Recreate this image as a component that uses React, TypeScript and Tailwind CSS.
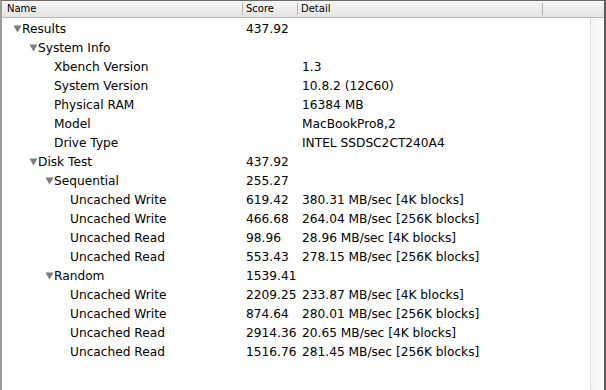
import React from "react";

type Row = { name: string; level: number; expandable?: boolean; score?: string; detail?: string };

const rows: Row[] = [
  { name: "Results", level: 0, expandable: true, score: "437.92" },
  { name: "System Info", level: 1, expandable: true },
  { name: "Xbench Version", level: 2, detail: "1.3" },
  { name: "System Version", level: 2, detail: "10.8.2 (12C60)" },
  { name: "Physical RAM", level: 2, detail: "16384 MB" },
  { name: "Model", level: 2, detail: "MacBookPro8,2" },
  { name: "Drive Type", level: 2, detail: "INTEL SSDSC2CT240A4" },
  { name: "Disk Test", level: 1, expandable: true, score: "437.92" },
  { name: "Sequential", level: 2, expandable: true, score: "255.27" },
  { name: "Uncached Write", level: 3, score: "619.42", detail: "380.31 MB/sec [4K blocks]" },
  { name: "Uncached Write", level: 3, score: "466.68", detail: "264.04 MB/sec [256K blocks]" },
  { name: "Uncached Read", level: 3, score: "98.96", detail: "28.96 MB/sec [4K blocks]" },
  { name: "Uncached Read", level: 3, score: "553.43", detail: "278.15 MB/sec [256K blocks]" },
  { name: "Random", level: 2, expandable: true, score: "1539.41" },
  { name: "Uncached Write", level: 3, score: "2209.25", detail: "233.87 MB/sec [4K blocks]" },
  { name: "Uncached Write", level: 3, score: "874.64", detail: "280.01 MB/sec [256K blocks]" },
  { name: "Uncached Read", level: 3, score: "2914.36", detail: "20.65 MB/sec [4K blocks]" },
  { name: "Uncached Read", level: 3, score: "1516.76", detail: "281.45 MB/sec [256K blocks]" },
];

const indents = ["pl-[11px]", "pl-[27px]", "pl-[43px]", "pl-[59px]"];

function Tri() {
  return (
    <svg width="9" height="8" viewBox="0 0 9 8" className="shrink-0">
      <polygon points="0.5,0.5 8.5,0.5 4.5,7.5" fill="#7d7d7d" />
    </svg>
  );
}

export default function App() {
  return (
    <div
      className="w-[606px] h-[390px] bg-white flex flex-col overflow-hidden border-t border-t-[#6b6b6b] border-l-2 border-l-[#9c9c9c] border-r-2 border-r-[#5a5a5a] text-black"
      style={{ fontFamily: '"DejaVu Sans", "Liberation Sans", sans-serif' }}
    >
      <div className="h-[17px] flex shrink-0 border-b border-b-[#b9b9b9] bg-gradient-to-b from-[#f6f6f6] to-[#e4e4e4] text-[10px] leading-[16px]">
        <div className="w-[241px] pl-[5px] border-r border-r-[#b4b4b4] my-[2px] leading-[12px]">Name</div>
        <div className="w-[55px] pl-[3px] border-r border-r-[#b4b4b4] my-[2px] leading-[12px]">Score</div>
        <div className="w-[245px] pl-[3px] border-r border-r-[#b4b4b4] my-[2px] leading-[12px]">Detail</div>
        <div className="flex-1" />
      </div>
      <div className="flex flex-1 min-h-0">
        <div className="flex-1 pt-[2px] text-[12.2px]">
          {rows.map((r, i) => (
            <div key={i} className="h-[19px] flex items-center">
              <div className={`w-[241px] flex items-center ${indents[r.level]}`}>
                {r.expandable ? <Tri /> : <span className="w-[9px] shrink-0" />}
                <span className="whitespace-nowrap">{r.name}</span>
              </div>
              <div className="w-[55px] pl-[3px] overflow-hidden whitespace-nowrap">{r.score ?? ""}</div>
              <div className="pl-[4px] whitespace-nowrap">{r.detail ?? ""}</div>
            </div>
          ))}
        </div>
        <div className="w-[14px] shrink-0 border-l border-l-[#dcdcdc] bg-gradient-to-r from-[#f3f3f3] to-[#fbfbfb]" />
      </div>
    </div>
  );
}
